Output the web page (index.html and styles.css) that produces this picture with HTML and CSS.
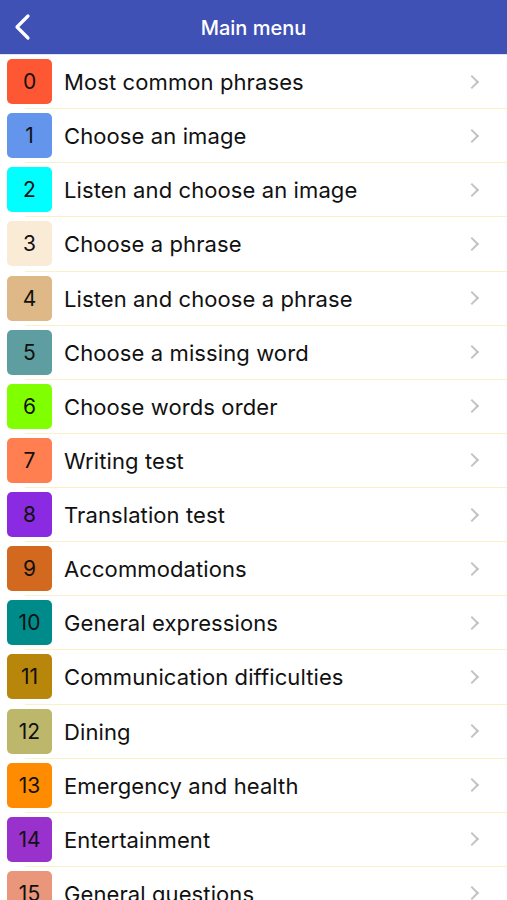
FILE: index.html
```html
<!DOCTYPE html>
<html>
<head>
<meta charset="utf-8">
<link rel="stylesheet" href="styles.css">
</head>
<body>
<header class="bar">
  <svg class="back" width="20" height="28" viewBox="0 0 20 28"><path d="M15 3 L4 14 L15 25" fill="none" stroke="#fff" stroke-width="3.2" stroke-linecap="round" stroke-linejoin="round"/></svg>
  <h1 class="title">Main menu</h1>
</header>
<ul class="list">
  <li class="row"><span class="badge" style="background:#fe5733">0</span><span class="label">Most common phrases</span><span class="chev"></span></li>
  <li class="row"><span class="badge" style="background:#6495ed">1</span><span class="label">Choose an image</span><span class="chev"></span></li>
  <li class="row"><span class="badge" style="background:#00ffff">2</span><span class="label">Listen and choose an image</span><span class="chev"></span></li>
  <li class="row"><span class="badge" style="background:#faebd7">3</span><span class="label">Choose a phrase</span><span class="chev"></span></li>
  <li class="row"><span class="badge" style="background:#deb887">4</span><span class="label">Listen and choose a phrase</span><span class="chev"></span></li>
  <li class="row"><span class="badge" style="background:#5f9ea0">5</span><span class="label">Choose a missing word</span><span class="chev"></span></li>
  <li class="row"><span class="badge" style="background:#7fff00">6</span><span class="label">Choose words order</span><span class="chev"></span></li>
  <li class="row"><span class="badge" style="background:#ff7f50">7</span><span class="label">Writing test</span><span class="chev"></span></li>
  <li class="row"><span class="badge" style="background:#8a2be2">8</span><span class="label">Translation test</span><span class="chev"></span></li>
  <li class="row"><span class="badge" style="background:#d2691e">9</span><span class="label">Accommodations</span><span class="chev"></span></li>
  <li class="row"><span class="badge" style="background:#008b8b">10</span><span class="label">General expressions</span><span class="chev"></span></li>
  <li class="row"><span class="badge" style="background:#b8860b">11</span><span class="label">Communication difficulties</span><span class="chev"></span></li>
  <li class="row"><span class="badge" style="background:#bdb76b">12</span><span class="label">Dining</span><span class="chev"></span></li>
  <li class="row"><span class="badge" style="background:#ff8c00">13</span><span class="label">Emergency and health</span><span class="chev"></span></li>
  <li class="row"><span class="badge" style="background:#9932cc">14</span><span class="label">Entertainment</span><span class="chev"></span></li>
  <li class="row"><span class="badge" style="background:#e9967a">15</span><span class="label">General questions</span><span class="chev"></span></li>
</ul>
</body>
</html>
```
FILE: styles.css
```css
* { box-sizing: border-box; }
html, body { margin: 0; padding: 0; background: #fff; }
body { font-family: Inter, "Liberation Sans", Arial, sans-serif; color: #111; overflow: hidden; height: 900px; }
.bar {
  height: 55px;
  background: #3f51b5;
  display: flex;
  align-items: center;
  justify-content: center;
  position: relative;
  border-bottom: 1px solid #dfe3f5;
}
.back { position: absolute; left: 13px; top: 13px; }
.title { margin: 0; color: #fff; font-size: 20px; font-weight: 500; margin-top: 2px; }
.list { list-style: none; margin: 0; padding: 0; }
.row {
  height: 54.14px;
  display: flex;
  align-items: center;
  padding-left: 7px;
  position: relative;
}
.row::after {
  content: "";
  position: absolute;
  left: 25px; right: 0; bottom: 0;
  height: 1px;
  background: #fcf0c6;
}
.badge {
  width: 45px; height: 45px;
  border-radius: 5px;
  display: flex; align-items: center; justify-content: center;
  font-size: 21px;
  color: #111;
  flex: none;
  margin-bottom: 1px;
}
.label { margin-left: 12px; font-size: 22px; flex: 1; letter-spacing: 0.1px; }
.chev {
  width: 10px; height: 10px;
  border-right: 2px solid #c3c3c7;
  border-top: 2px solid #c3c3c7;
  transform: rotate(45deg);
  margin-right: 30px;
  margin-bottom: 1px;
}
```
